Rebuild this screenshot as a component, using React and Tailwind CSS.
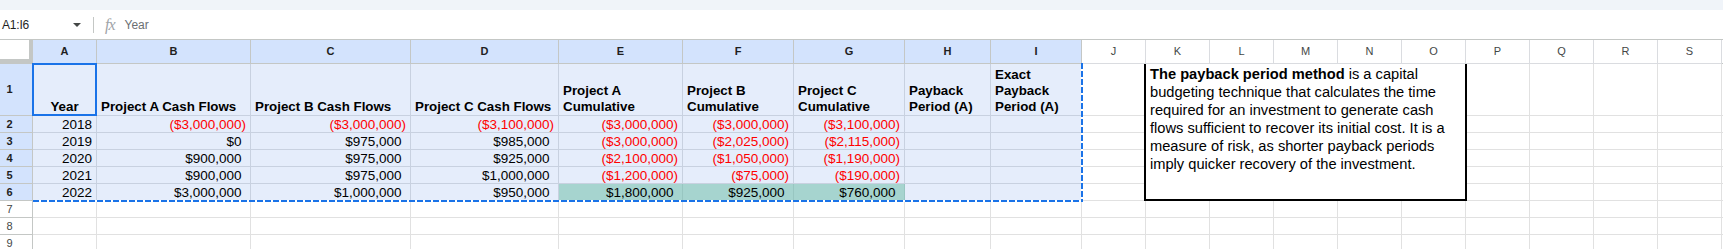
import React from "react";

const widths = [64, 154, 160, 148, 124, 111, 111, 86, 91, 64, 64, 64, 64, 64, 64, 64, 64, 64, 64];
const letters = "ABCDEFGHIJKLMNOPQRS".split("");

const headers = [
  "Year",
  "Project A Cash Flows",
  "Project B Cash Flows",
  "Project C Cash Flows",
  "Project A Cumulative",
  "Project B Cumulative",
  "Project C Cumulative",
  "Payback Period (A)",
  "Exact Payback Period (A)",
];

const data = [
  ["2018", "($3,000,000)", "($3,000,000)", "($3,100,000)", "($3,000,000)", "($3,000,000)", "($3,100,000)", "", ""],
  ["2019", "$0", "$975,000", "$985,000", "($3,000,000)", "($2,025,000)", "($2,115,000)", "", ""],
  ["2020", "$900,000", "$975,000", "$925,000", "($2,100,000)", "($1,050,000)", "($1,190,000)", "", ""],
  ["2021", "$900,000", "$975,000", "$1,000,000", "($1,200,000)", "($75,000)", "($190,000)", "", ""],
  ["2022", "$3,000,000", "$1,000,000", "$950,000", "$1,800,000", "$925,000", "$760,000", "", ""],
];

function HeaderRow() {
  return (
    <>
      <div className="h-[24px] bg-white border-r-[4px] border-b-[5px] border-[#c4c7c5]" />
      {letters.map((l, i) => {
        const sel = i < 9;
        return (
          <div
            key={l}
            className={
              "h-[24px] flex items-center justify-center border-r border-b text-[11px] " +
              (sel
                ? "bg-[#d3e3fd] border-[#c4c7c5] font-bold text-[#1f1f1f]"
                : "bg-white border-[#dadce0] text-[#444746]")
            }
          >
            {l}
          </div>
        );
      })}
      <div className="h-[24px] bg-white border-b border-[#c4c7c5]" />
    </>
  );
}

function RowHeader({ n, h }) {
  const sel = n <= 6;
  return (
    <div
      className={
        "flex items-center border-r border-b text-[11px] " +
        h +
        (sel
          ? " bg-[#d3e3fd] border-[#c4c7c5] font-bold text-[#1f1f1f]"
          : " bg-white border-[#c4c7c5] text-[#444746]")
      }
    >
      <span className="w-[19px] text-center">{n}</span>
    </div>
  );
}

function Row1() {
  return (
    <>
      <RowHeader n={1} h="h-[52px]" />
      {widths.map((w, i) => {
        if (i < 9) {
          const txt = headers[i];
          return (
            <div
              key={i}
              className={
                "h-[52px] flex items-end border-r border-b border-[#c8d1e0] bg-[#e5edfb] px-[4px] text-[13.33px] leading-[16px] font-bold text-black " +
                (i === 0 ? "justify-center" : "justify-start")
              }
            >
              <span>{txt}</span>
            </div>
          );
        }
        return <div key={i} className="h-[52px] border-r border-b border-[#e1e1e1] bg-white" />;
      })}
      <div className="h-[52px] border-b border-[#e1e1e1]" />
    </>
  );
}

function DataRow({ n, vals }) {
  return (
    <>
      <RowHeader n={n} h="h-[17px]" />
      {widths.map((w, i) => {
        if (vals && i < 9) {
          const v = vals[i];
          const neg = v.startsWith("(");
          const green = n === 6 && i >= 4 && i <= 6;
          const isYear = i === 0;
          return (
            <div
              key={i}
              className={
                "h-[17px] flex items-center justify-end border-r border-b pr-[4px] text-[13.5px] leading-[17px] whitespace-nowrap " +
                (green ? "bg-[#a6d4cf] border-[#98c6c1] " : "bg-[#e5edfb] border-[#c8d1e0] ") +
                (neg ? "text-[#ff0000]" : "text-black")
              }
            >
              {v}
              {!neg && !isYear && v !== "" ? <span className="invisible">)</span> : null}
            </div>
          );
        }
        return <div key={i} className="h-[17px] border-r border-b border-[#e1e1e1] bg-white" />;
      })}
      <div className="h-[17px] border-b border-[#e1e1e1]" />
    </>
  );
}

export default function App() {
  return (
    <div className="relative w-[1723px] h-[249px] overflow-hidden bg-white font-['Liberation_Sans',Arial,sans-serif]">
      <div className="h-[10px] bg-[#f0f4f9]" />
      <div className="h-[30px] flex items-center border-b border-[#c4c7c5] bg-white">
        <div className="w-[93px] flex items-center justify-between pl-[2px] pr-[12px]">
          <span className="text-[12px] tracking-[-0.2px] text-[#1f1f1f]">A1:I6</span>
          <svg width="8" height="4" viewBox="0 0 8 4">
            <path d="M0 0 L8 0 L4 4 Z" fill="#444746" />
          </svg>
        </div>
        <div className="w-px h-[16px] bg-[#c4c7c5]" />
        <span className="ml-[11px] italic font-['Liberation_Serif',serif] text-[16px] text-[#a0a4a8] tracking-[-1px]">
          fx
        </span>
        <span className="ml-[10px] text-[12px] text-[#6b6f73]">Year</span>
      </div>
      <div className="grid grid-cols-[33px_64px_154px_160px_148px_124px_111px_111px_86px_91px_repeat(10,64px)_1fr]">
        <HeaderRow />
        <Row1 />
        {data.map((vals, r) => (
          <DataRow key={r} n={r + 2} vals={vals} />
        ))}
        <DataRow n={7} />
        <DataRow n={8} />
        <DataRow n={9} />
      </div>

      {/* active cell */}
      <div className="absolute left-[32px] top-[63px] w-[65px] h-[53px] border-2 border-[#1a73e8]" />

      {/* copy marquee */}
      <div className="absolute left-[1081px] top-[63px] w-[2px] h-[139px] bg-[repeating-linear-gradient(to_bottom,#1a73e8_0px,#1a73e8_6px,#ffffff_6px,#ffffff_8px)]" />
      <div className="absolute left-[33px] top-[200px] w-[1050px] h-[2px] bg-[repeating-linear-gradient(to_right,#1a73e8_0px,#1a73e8_6px,#ffffff_6px,#ffffff_8px)]" />

      {/* text box */}
      <div className="absolute left-[1144px] top-[64px] w-[323px] h-[137px] bg-white border-x-2 border-b-2 border-black pl-[4px] pt-[1px] text-[14.67px] leading-[18px] text-black whitespace-nowrap">
        <div>
          <span className="font-bold">The payback period method</span> is a capital
        </div>
        <div>budgeting technique that calculates the time</div>
        <div>required for an investment to generate cash</div>
        <div>flows sufficient to recover its initial cost. It is a</div>
        <div>measure of risk, as shorter payback periods</div>
        <div>imply quicker recovery of the investment.</div>
      </div>
    </div>
  );
}
